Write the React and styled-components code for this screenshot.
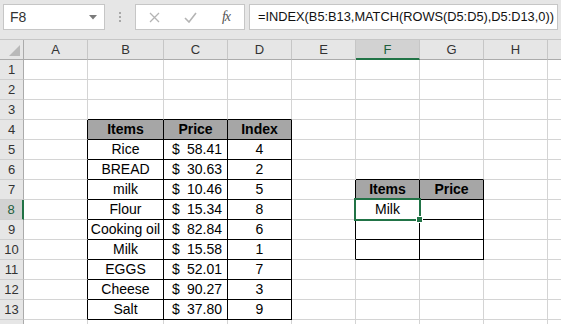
import React from 'react';
import styled, { createGlobalStyle } from 'styled-components';

const GlobalStyle = createGlobalStyle`
  html, body {
    margin: 0;
    padding: 0;
    background: #fff;
  }
  body {
    font-family: "Liberation Sans", Arial, sans-serif;
  }
`;

const GREEN = '#217346';

const Window = styled.div`
  width: 561px;
  height: 324px;
  overflow: hidden;
  background: #fff;
`;

const FormulaBar = styled.div`
  display: flex;
  align-items: flex-start;
  height: 40px;
  box-sizing: border-box;
  padding: 4px 0 0 3px;
  background: #e6e6e6;
  border-bottom: 1px solid #c6c6c6;
`;

const NameBox = styled.div`
  box-sizing: border-box;
  width: 102px;
  height: 26px;
  display: flex;
  align-items: center;
  justify-content: space-between;
  padding: 0 7px 0 6px;
  background: #fff;
  border: 1px solid #c6c6c6;
  font-size: 14px;
  color: #333;
`;

const Grip = styled.div`
  width: 30px;
  height: 26px;
  display: flex;
  flex-direction: column;
  align-items: center;
  justify-content: center;
  gap: 2px;
`;

const Dot = styled.span`
  width: 2px;
  height: 2px;
  background: #a8a8a8;
`;

const ButtonBox = styled.div`
  box-sizing: border-box;
  width: 110px;
  height: 26px;
  display: flex;
  background: #fff;
  border: 1px solid #c6c6c6;
`;

const BarButton = styled.div`
  width: 36px;
  display: flex;
  align-items: center;
  justify-content: center;
`;

const Fx = styled.span`
  font-family: "Liberation Serif", "Times New Roman", serif;
  font-style: italic;
  font-size: 14px;
  color: #555;
  letter-spacing: -1px;
`;

const FormulaInput = styled.div`
  flex: 1;
  box-sizing: border-box;
  height: 26px;
  margin: 0 3px 0 4px;
  padding-left: 8px;
  background: #fff;
  border: 1px solid #c6c6c6;
  font-size: 12.8px;
  line-height: 24px;
  color: #111;
  white-space: nowrap;
  overflow: hidden;
`;

const Sheet = styled.div`
  display: grid;
  grid-template-columns: 24px 64px 76px repeat(7, 64px);
  grid-auto-rows: 20px;
`;

const Corner = styled.div`
  box-sizing: border-box;
  background: #e6e6e6;
  border-right: 1px solid #ababab;
  border-bottom: 1px solid #ababab;
  display: flex;
  align-items: flex-end;
  justify-content: flex-end;
  padding: 0 3px 3px 0;
`;

const ColHeader = styled.div`
  box-sizing: border-box;
  background: ${p => (p.$active ? '#d2d2d2' : '#e6e6e6')};
  border-right: 1px solid #c6c6c6;
  border-bottom: ${p => (p.$active ? `2px solid ${GREEN}` : '1px solid #ababab')};
  color: ${p => (p.$active ? '#1e5e3b' : '#333')};
  font-size: 13px;
  line-height: 19px;
  text-align: center;
`;

const RowHeader = styled.div`
  box-sizing: border-box;
  background: ${p => (p.$active ? '#d2d2d2' : '#e6e6e6')};
  border-right: ${p => (p.$active ? `2px solid ${GREEN}` : '1px solid #ababab')};
  border-bottom: 1px solid #cfcfcf;
  color: ${p => (p.$active ? '#1e5e3b' : '#333')};
  font-size: 13px;
  line-height: 19px;
  text-align: center;
`;

const Cell = styled.div`
  position: relative;
  box-sizing: border-box;
  display: flex;
  align-items: center;
  justify-content: ${p => p.$justify || 'center'};
  padding: ${p => (p.$price ? '0 5px 0 8px' : '0 2px')};
  background: ${p => (p.$head ? '#a6a6a6' : '#fff')};
  border-right: 1px solid ${p => (p.$right ? '#000' : '#d4d4d4')};
  border-bottom: 1px solid ${p => (p.$bottom ? '#000' : '#d4d4d4')};
  font-size: 14px;
  font-weight: ${p => (p.$head ? 'bold' : 'normal')};
  line-height: 19px;
  color: #000;
  white-space: nowrap;
`;

const Selection = styled.div`
  position: absolute;
  top: -2px;
  left: -2px;
  width: 67px;
  height: 23px;
  box-sizing: border-box;
  border: 2px solid ${GREEN};
  z-index: 2;
  pointer-events: none;
`;

const FillHandle = styled.div`
  position: absolute;
  right: -4px;
  bottom: -4px;
  width: 7px;
  height: 7px;
  box-sizing: border-box;
  background: ${GREEN};
  border: 1px solid #fff;
`;

// the last column only peeks in at the right edge, its letter is off screen
const COLS = ['A', 'B', 'C', 'D', 'E', 'F', 'G', 'H', ''];
const ROWS = 14;

const items = [
  ['Rice', '58.41', '4'],
  ['BREAD', '30.63', '2'],
  ['milk', '10.46', '5'],
  ['Flour', '15.34', '8'],
  ['Cooking oil', '82.84', '6'],
  ['Milk', '15.58', '1'],
  ['EGGS', '52.01', '7'],
  ['Cheese', '90.27', '3'],
  ['Salt', '37.80', '9'],
];

const selected = { r: 8, c: 5 };

const inTable = (r, c) =>
  (r >= 4 && r <= 13 && c >= 1 && c <= 3) ||
  (r >= 7 && r <= 10 && c >= 5 && c <= 6);

const cellAt = (r, c) => {
  if (r === 4 && c >= 1 && c <= 3) return { text: ['Items', 'Price', 'Index'][c - 1], head: true };
  if (r >= 5 && r <= 13 && c >= 1 && c <= 3) {
    const row = items[r - 5];
    if (c === 2) return { price: row[1] };
    return { text: row[c === 1 ? 0 : 2] };
  }
  if (r === 7 && (c === 5 || c === 6)) return { text: c === 5 ? 'Items' : 'Price', head: true };
  if (r === 8 && c === 5) return { text: 'Milk' };
  return {};
};

const DropArrow = () => (
  <svg width="8" height="5" viewBox="0 0 8 5">
    <polygon points="0,0 8,0 4,4.5" fill="#7a7a7a" />
  </svg>
);

const Cross = () => (
  <svg width="11" height="11" viewBox="0 0 11 11">
    <path d="M1 1 L10 10 M10 1 L1 10" stroke="#b4b4b4" strokeWidth="1.3" fill="none" />
  </svg>
);

const Check = () => (
  <svg width="13" height="11" viewBox="0 0 13 11">
    <path d="M1 6 L5 10 L12 1" stroke="#b4b4b4" strokeWidth="1.6" fill="none" />
  </svg>
);

const SelectAll = () => (
  <svg width="11" height="11" viewBox="0 0 11 11">
    <polygon points="11,0 11,11 0,11" fill="#b9b9b9" />
  </svg>
);

const Price = ({ value }) => (
  <>
    <span>$</span>
    <span>{value}</span>
  </>
);

export default function App() {
  const rows = [];
  for (let r = 1; r <= ROWS; r++) {
    rows.push(
      <RowHeader key={`h${r}`} $active={r === selected.r}>
        {r}
      </RowHeader>
    );
    COLS.forEach((_, c) => {
      const cell = cellAt(r, c);
      const isSel = r === selected.r && c === selected.c;
      rows.push(
        <Cell
          key={`${r}-${c}`}
          $head={cell.head}
          $price={!!cell.price}
          $justify={cell.price ? 'space-between' : 'center'}
          $right={inTable(r, c) || inTable(r, c + 1)}
          $bottom={inTable(r, c) || inTable(r + 1, c)}
        >
          {cell.price ? <Price value={cell.price} /> : cell.text}
          {isSel && (
            <Selection>
              <FillHandle />
            </Selection>
          )}
        </Cell>
      );
    });
  }

  return (
    <Window>
      <GlobalStyle />
      <FormulaBar>
        <NameBox>
          <span>F8</span>
          <DropArrow />
        </NameBox>
        <Grip>
          <Dot />
          <Dot />
          <Dot />
        </Grip>
        <ButtonBox>
          <BarButton><Cross /></BarButton>
          <BarButton><Check /></BarButton>
          <BarButton><Fx>fx</Fx></BarButton>
        </ButtonBox>
        <FormulaInput>=INDEX(B5:B13,MATCH(ROWS(D5:D5),D5:D13,0))</FormulaInput>
      </FormulaBar>
      <Sheet>
        <Corner><SelectAll /></Corner>
        {COLS.map((name, c) => (
          <ColHeader key={`col${c}`} $active={c === selected.c}>
            {name}
          </ColHeader>
        ))}
        {rows}
      </Sheet>
    </Window>
  );
}
